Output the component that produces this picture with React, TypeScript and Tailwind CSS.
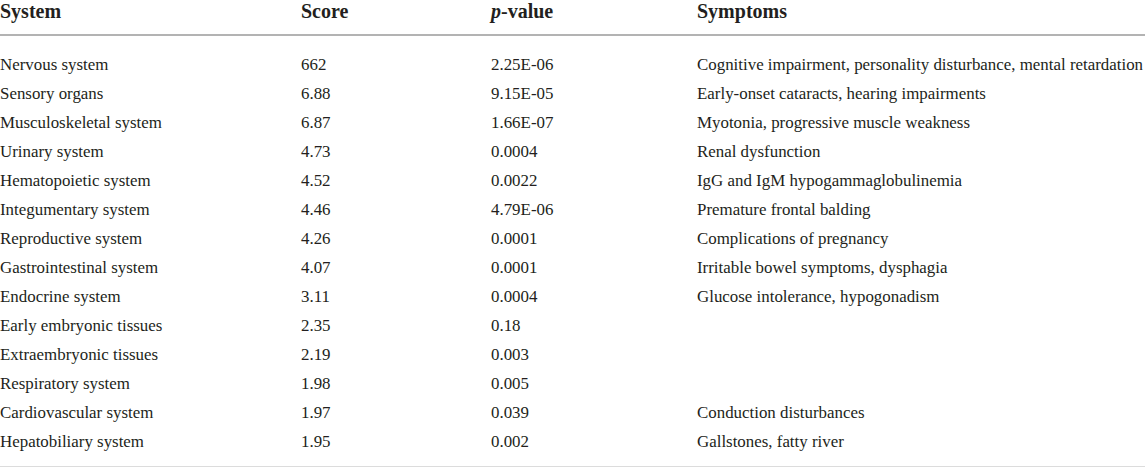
import React from "react";

const rows: [string, string, string, string][] = [
  ["Nervous system", "662", "2.25E-06", "Cognitive impairment, personality disturbance, mental retardation"],
  ["Sensory organs", "6.88", "9.15E-05", "Early-onset cataracts, hearing impairments"],
  ["Musculoskeletal system", "6.87", "1.66E-07", "Myotonia, progressive muscle weakness"],
  ["Urinary system", "4.73", "0.0004", "Renal dysfunction"],
  ["Hematopoietic system", "4.52", "0.0022", "IgG and IgM hypogammaglobulinemia"],
  ["Integumentary system", "4.46", "4.79E-06", "Premature frontal balding"],
  ["Reproductive system", "4.26", "0.0001", "Complications of pregnancy"],
  ["Gastrointestinal system", "4.07", "0.0001", "Irritable bowel symptoms, dysphagia"],
  ["Endocrine system", "3.11", "0.0004", "Glucose intolerance, hypogonadism"],
  ["Early embryonic tissues", "2.35", "0.18", ""],
  ["Extraembryonic tissues", "2.19", "0.003", ""],
  ["Respiratory system", "1.98", "0.005", ""],
  ["Cardiovascular system", "1.97", "0.039", "Conduction disturbances"],
  ["Hepatobiliary system", "1.95", "0.002", "Gallstones, fatty river"],
];

export default function App() {
  return (
    <div
      className="w-[1145px] h-[475px] bg-white text-[#231f20] overflow-hidden"
      style={{ fontFamily: '"Liberation Serif", "Times New Roman", serif' }}
    >
      <div className="grid grid-cols-[301px_190px_206px_1fr] h-[36px] items-start border-b-2 border-[#b3b3b3] text-[20px] font-bold leading-[22px]">
        <div>System</div>
        <div>Score</div>
        <div>
          <i>p</i>-value
        </div>
        <div>Symptoms</div>
      </div>
      <div className="pt-[14px] pb-[10px] border-b border-[#dcdcdc] text-[16.9px] leading-[29px]">
        {rows.map((r) => (
          <div key={r[0]} className="grid grid-cols-[301px_190px_206px_1fr] h-[29px] whitespace-nowrap">
            <div>{r[0]}</div>
            <div>{r[1]}</div>
            <div>{r[2]}</div>
            <div>{r[3]}</div>
          </div>
        ))}
      </div>
    </div>
  );
}
